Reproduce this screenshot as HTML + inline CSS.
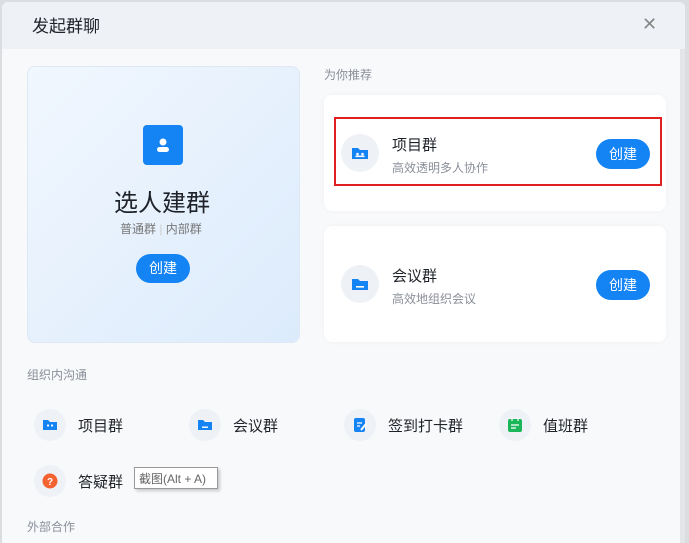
<!DOCTYPE html><html><head><meta charset="utf-8"><style>
*{margin:0;padding:0;box-sizing:border-box}
body{width:689px;height:543px;overflow:hidden;background:#dcdde0;font-family:"Liberation Sans","Noto Sans CJK SC",sans-serif;position:relative}
.a{position:absolute}
.dlg{left:2px;top:2px;width:683px;height:541px;background:#f8f9fb;border-radius:6px 6px 0 0;overflow:hidden}
.hd{left:0;top:0;width:683px;height:47px;background:#eef1f5}
.t{font-size:17px;color:#1f2329;white-space:nowrap}
.btn{background:#1483f4;color:#fff;font-size:14px;border-radius:15px;text-align:center;line-height:29px}
.card{background:#fff;border-radius:8px;box-shadow:0 0 6px rgba(0,0,0,.04)}
.ic{border-radius:50%;background:#eef1f5}
.s{font-size:12px;color:#8a8f99;white-space:nowrap}
</style></head><body>
<div class="a dlg">
<div class="a hd"></div>
<div class="a t" style="left:30px;top:10px">发起群聊</div>
<div class="a" style="left:640px;top:12px;font-size:18px;color:#888">✕</div>
<div class="a" style="left:678px;top:47px;width:5px;height:494px;background:#e4e5e7"></div>
<div class="a" style="left:25px;top:64px;width:273px;height:277px;border-radius:8px;background:linear-gradient(135deg,#f1f7fe,#dcebfc);border:1px solid #dfe9f5"></div>
<div class="a" style="left:141px;top:123px;width:40px;height:40px;background:#1483f4;border-radius:4px"><svg width="40" height="40"><circle cx="20" cy="17" r="3.5" fill="#fff"/><rect x="14" y="22" width="12" height="5" rx="2.5" fill="#fff"/></svg></div>
<div class="a" style="left:112px;top:181px;font-size:24px;color:#1f2329">选人建群</div>
<div class="a s" style="left:118px;top:218px;color:#777">普通群 <span style="color:#ccc">|</span> 内部群</div>
<div class="a btn" style="left:134px;top:252px;width:54px;height:29px">创建</div>
<div class="a s" style="left:322px;top:64px">为你推荐</div>
<div class="a card" style="left:322px;top:93px;width:342px;height:116px"></div>
<div class="a" style="left:332px;top:115px;width:328px;height:69px;border:2px solid #e02020"></div>
<div class="a ic" style="left:339px;top:132px;width:38px;height:38px"><svg width="38" height="38"><path d="M11 14h6l2 2h8v9h-16z" fill="#1483f4"/><circle cx="16.5" cy="20" r="1.3" fill="#fff"/><circle cx="21.5" cy="20" r="1.3" fill="#fff"/><rect x="14.5" y="21.5" width="9" height="1.6" fill="#fff"/></svg></div>
<div class="a t" style="left:390px;top:132px;font-size:15px">项目群</div>
<div class="a s" style="left:390px;top:157px">高效透明多人协作</div>
<div class="a btn" style="left:594px;top:137px;width:54px;height:30px;line-height:30px">创建</div>
<div class="a card" style="left:322px;top:224px;width:342px;height:116px"></div>
<div class="a ic" style="left:339px;top:263px;width:38px;height:38px"><svg width="38" height="38"><path d="M11 14h6l2 2h8v9h-16z" fill="#1483f4"/><rect x="15" y="21" width="8" height="1.6" fill="#fff"/></svg></div>
<div class="a t" style="left:390px;top:263px;font-size:15px">会议群</div>
<div class="a s" style="left:390px;top:288px">高效地组织会议</div>
<div class="a btn" style="left:594px;top:268px;width:54px;height:30px;line-height:30px">创建</div>
<div class="a s" style="left:25px;top:364px">组织内沟通</div>
<div class="a ic" style="left:32px;top:407px;width:32px;height:32px"><svg width="32" height="32"><path d="M9 11h5l2 2h7v8h-14z" fill="#1483f4"/><circle cx="14" cy="16.5" r="1.1" fill="#fff"/><circle cx="18" cy="16.5" r="1.1" fill="#fff"/></svg></div>
<div class="a t" style="left:76px;top:413px;font-size:15px">项目群</div>
<div class="a ic" style="left:187px;top:407px;width:32px;height:32px"><svg width="32" height="32"><path d="M9 11h5l2 2h7v8h-14z" fill="#1483f4"/><rect x="13" y="17.5" width="6" height="1.4" fill="#fff"/></svg></div>
<div class="a t" style="left:231px;top:413px;font-size:15px">会议群</div>
<div class="a ic" style="left:342px;top:407px;width:32px;height:32px"><svg width="32" height="32"><rect x="10" y="9" width="11" height="14" rx="2" fill="#1483f4"/><path d="M13 14h5M13 17h3" stroke="#fff" stroke-width="1.3"/><path d="M22 15l-5 6" stroke="#fff" stroke-width="2"/></svg></div>
<div class="a t" style="left:386px;top:413px;font-size:15px">签到打卡群</div>
<div class="a ic" style="left:497px;top:407px;width:32px;height:32px"><svg width="32" height="32"><rect x="9" y="10" width="14" height="13" rx="2" fill="#1bb65a"/><path d="M13 9v3M19 9v3M12 16h8M12 19h5" stroke="#fff" stroke-width="1.2"/></svg></div>
<div class="a t" style="left:541px;top:413px;font-size:15px">值班群</div>
<div class="a ic" style="left:32px;top:463px;width:32px;height:32px"><svg width="32" height="32"><circle cx="16" cy="16" r="7.5" fill="#f56232"/><text x="16" y="20" font-size="10" fill="#fff" text-anchor="middle" font-family="Liberation Sans" font-weight="bold">?</text></svg></div>
<div class="a t" style="left:76px;top:469px;font-size:15px">答疑群</div>
<div class="a" style="left:132px;top:465px;width:84px;height:22px;background:#fff;border:1px solid #999;box-shadow:2px 2px 3px rgba(0,0,0,.2);font-size:12px;color:#666;padding:2px 4px;white-space:nowrap">截图(Alt + A)</div>
<div class="a s" style="left:25px;top:516px">外部合作</div>
</div>
</body></html>
